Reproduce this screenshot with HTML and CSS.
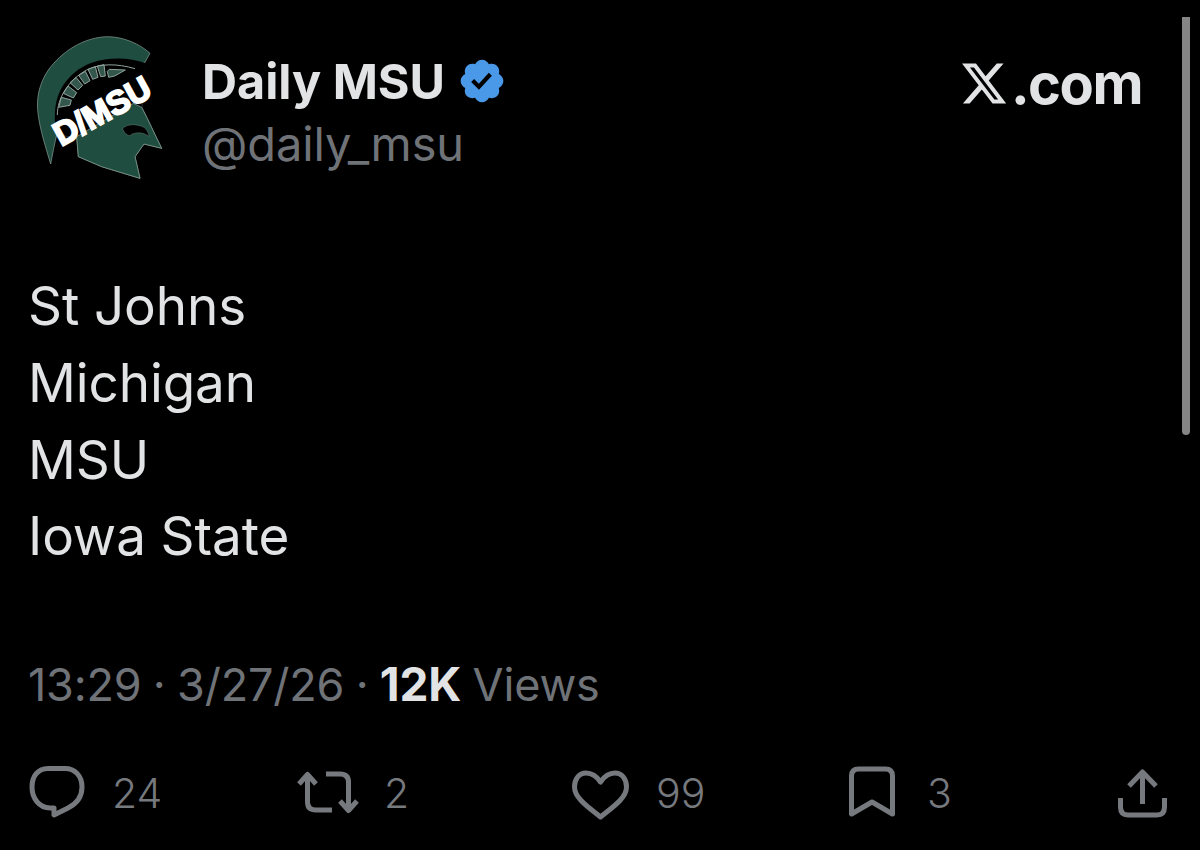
FILE: index.html
```html
<!DOCTYPE html>
<html lang="en">
<head>
<meta charset="utf-8">
<title>Daily MSU</title>
<link rel="stylesheet" href="styles.css">
</head>
<body>
<main class="post">
  <header class="head">
    <svg class="avatar" viewBox="0 0 540 540" aria-label="D/MSU logo">
      <path class="helm" d="M390 100 C360 72 310 50 262 50 C190 52 125 95 85 150 C58 190 48 235 54 280 C60 330 78 385 92 432 C98 400 104 370 110 345 L170 350 L175 410 L245 440 L360 475 L345 410 L372 372 L425 385 C405 345 385 300 365 262 L372 132 Z"/>
      <path class="under" d="M376 130 C330 112 270 110 215 128 C160 148 118 195 108 250 C102 285 104 320 110 345 L180 352 L365 262 Z"/>
      <path class="crest" d="M116 262 L150 256 L154 240 L124 232 Z M130 220 L160 234 L170 218 L144 198 Z M150 188 L174 210 L188 196 L168 172 Z M176 166 L194 192 L210 182 L196 154 Z M204 148 L218 178 L234 172 L226 140 Z M232 138 L242 170 L256 168 L252 134 Z M262 154 L266 172 L284 168 L316 150 L268 148 Z" />
      <path class="arcline" d="M112 285 C112 235 145 180 200 150 C240 130 290 130 345 146"/>
      <path class="face" d="M170 350 L340 250 L365 262 C385 300 405 345 425 385 L372 372 L345 410 L360 475 L245 440 L175 410 Z"/>
      <path class="eye" d="M308 325 C325 310 350 312 372 322 C380 328 385 338 388 350 C370 335 345 335 328 347 C318 345 310 335 308 325 Z"/>
      <text class="brand" x="0" y="0" textLength="318" lengthAdjust="spacingAndGlyphs" transform="translate(124 380) rotate(-29)">D/MSU</text>
    </svg>
    <div class="who">
      <div class="name-row">
        <span class="name">Daily MSU</span>
        <svg class="badge" viewBox="0 0 24 24" aria-label="Verified"><path fill-rule="evenodd" d="M22.25 12c0-1.43-.88-2.67-2.19-3.34.46-1.39.2-2.9-.81-3.91s-2.52-1.27-3.91-.81c-.66-1.31-1.91-2.19-3.34-2.19s-2.67.88-3.33 2.19c-1.4-.46-2.91-.2-3.92.81s-1.26 2.52-.8 3.91c-1.31.67-2.2 1.91-2.2 3.34s.89 2.67 2.2 3.34c-.46 1.39-.21 2.9.8 3.91s2.52 1.26 3.91.81c.67 1.31 1.91 2.19 3.34 2.19s2.68-.88 3.34-2.19c1.39.45 2.9.2 3.91-.81s1.27-2.52.81-3.91c1.31-.67 2.19-1.91 2.19-3.34zm-11.71 4.2L6.8 12.46l1.41-1.42 2.26 2.26 4.8-5.23 1.47 1.36-6.2 6.77z"/></svg>
      </div>
      <div class="handle">@daily_msu</div>
    </div>
    <div class="site">
      <svg class="xmark" viewBox="1.25 2.25 21.5 19.5" aria-label="X"><path d="M18.244 2.25h3.308l-7.227 8.26 8.502 11.24H16.17l-5.214-6.817L4.99 21.75H1.68l7.73-8.835L1.254 2.25H8.08l4.713 6.231zm-1.161 17.52h1.833L7.084 4.126H5.117z"/></svg>
      <span class="site-text">.com</span>
    </div>
  </header>

  <section class="body">
    <p class="line">St Johns</p>
    <p class="line">Michigan</p>
    <p class="line">MSU</p>
    <p class="line">Iowa State</p>
  </section>

  <p class="meta">13:29 · 3/27/26 · <strong class="views">12K</strong> Views</p>

  <nav class="actions">
    <div class="action action-reply">
      <svg class="icon" width="60" height="60" viewBox="28 762 60 60"><path d="M48 767.5 H65 C75 767.5 82 775 82 786 C82 796 76 803 68 807 L54 814 V807 H50 C39 807 32 797 32 786 C32 775 38 767.5 48 767.5 Z"/></svg>
      <span class="count">24</span>
    </div>
    <div class="action action-repost">
      <svg class="icon" width="65" height="60" viewBox="295 762 65 60"><path d="M299 783 L307.5 773.5 L316 783 M307.5 774 V801 Q307.5 809 316 809 H332 M326 773 H340 Q348.5 773 348.5 781 V809 M340 800 L348.5 809.5 L357 800"/></svg>
      <span class="count">2</span>
    </div>
    <div class="action action-like">
      <svg class="icon" width="62" height="60" viewBox="570 762 62 60"><path d="M600.5 781 C596.5 775 591 772 586 772 C579 772 574.5 778 574.5 786 C574.5 797 588 806 600.5 816 C613 806 626.5 797 626.5 786 C626.5 778 622 772 615 772 C610 772 604.5 775 600.5 781 Z"/></svg>
      <span class="count">99</span>
    </div>
    <div class="action action-save">
      <svg class="icon" width="55" height="60" viewBox="848 762 55 60"><path d="M851.5 813 V775 Q851.5 768 858.5 768 H885.5 Q892.5 768 892.5 775 V813 L872 801 Z"/></svg>
      <span class="count">3</span>
    </div>
    <div class="action action-share">
      <svg class="icon" width="52" height="60" viewBox="1117 762 52 60"><path d="M1143.5 803 V771 M1130 785 L1143.5 771 L1157 785 M1121.5 797 V806 Q1121.5 814 1129 814 H1158 Q1165.5 814 1165.5 806 V797"/></svg>
    </div>
  </nav>
</main>
<div class="scrollbar"></div>
</body>
</html>
```

FILE: styles.css
```css
* { box-sizing: border-box; }
html, body { margin: 0; padding: 0; background: #000; }
body {
  width: 1200px;
  height: 850px;
  overflow: hidden;
  position: relative;
  font-family: "Inter", "Liberation Sans", sans-serif;
  color: #e2e3e4;
}
.post { display: flex; flex-direction: column; height: 850px; }

.head { display: flex; align-items: flex-start; padding: 20px 58px 0 20px; height: 268px; }
.avatar { width: 180px; height: 180px; flex: none; }
.helm { fill: #1f4d3f; stroke: #8fa39b; stroke-width: 2; }
.under { fill: #000; }
.crest { fill: #33574c; stroke: #8fa39b; stroke-width: 3; }
.arcline { fill: none; stroke: #8fa39b; stroke-width: 3; }
.face { fill: #1f4d3f; stroke: #8fa39b; stroke-width: 2; }
.eye { fill: #000; stroke: #8fa39b; stroke-width: 1; }
.brand { font-family: "Liberation Sans", sans-serif; font-weight: 700; font-size: 100px; fill: #fff; stroke: #fff; stroke-width: 6; }

.who { margin-left: 2px; padding-top: 30px; display: flex; flex-direction: column; }
.name-row { display: flex; align-items: center; gap: 12px; height: 62px; }
.name { font-size: 48.5px; font-weight: 700; color: #e2e3e4; }
.badge { width: 50px; height: 50px; fill: #4a99e9; }
.handle { font-size: 47px; line-height: 64px; color: #6f7378; font-weight: 400; letter-spacing: -0.1px; }

.site { margin-left: auto; padding-top: 36px; display: flex; align-items: flex-end; gap: 5px; }
.xmark { width: 44px; height: 43px; fill: #e2e3e4; margin-bottom: 7px; }
.site-text { font-size: 56px; line-height: 56px; font-weight: 700; color: #e2e3e4; letter-spacing: -1.5px; }

.body { padding-left: 28px; }
.line { margin: 0; font-size: 53px; line-height: 76.75px; font-weight: 400; color: #e2e3e4; letter-spacing: -0.1px; }

.meta { margin: 79px 0 0; padding-left: 28px; font-size: 45px; line-height: 60px; color: #6f7378; letter-spacing: -0.2px; word-spacing: -1px; }
.views { color: #e2e3e4; font-weight: 700; font-size: 46px; }

.actions { margin-top: 48px; padding-left: 28px; display: grid; grid-template-columns: 267px 275px 278px 268px 52px; align-items: center; height: 60px; }
.action { display: flex; align-items: center; }
.icon { flex: none; fill: none; stroke: #76797e; stroke-width: 5; stroke-linejoin: round; stroke-linecap: butt; }
.count { font-size: 41px; font-weight: 300; color: #76797e; margin-left: 24px; }

.scrollbar { position: absolute; left: 1182px; top: 17px; width: 8px; height: 418px; background: #858585; border-radius: 0 0 4px 4px; }
```
